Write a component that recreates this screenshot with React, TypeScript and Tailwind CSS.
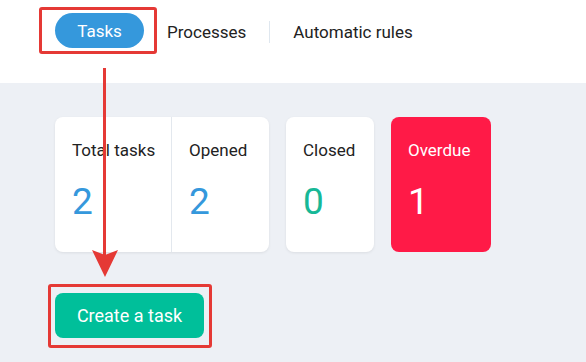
import React from "react";

function StatCell({ label, value, valueClass, className }) {
  return (
    <div className={"flex flex-col pl-[17px] pt-[21px] " + className}>
      <span className="text-[17px] leading-[24px]">{label}</span>
      <span className={"mt-[19px] text-[37px] leading-[42px] " + valueClass}>{value}</span>
    </div>
  );
}

function App() {
  return (
    <div
      className="relative w-[586px] h-[362px] bg-[#edf0f5] overflow-hidden"
      style={{ fontFamily: "Roboto, 'Liberation Sans', sans-serif" }}
    >
      <div className="h-[83px] bg-white pt-[7px] pl-[39px]">
        <div className="flex items-center h-[47px]">
          <div className="border-[3px] border-[#e53935] rounded-[3px] h-[47px] w-[118px] flex items-center pl-[13px]">
            <div className="h-[35px] w-[89px] rounded-full bg-[#3598dc] text-white text-[17px] pt-[2px] flex items-center justify-center">
              Tasks
            </div>
          </div>
          <span className="ml-[10px] pt-[4px] text-[17px] text-[#222]">Processes</span>
          <div className="ml-[23px] mt-[2px] w-px h-[22px] bg-[#dfe7ef]" />
          <span className="ml-[23px] pt-[4px] text-[17px] text-[#222]">Automatic rules</span>
        </div>
      </div>

      <div className="pt-[34px] pl-[55px]">
        <div className="flex gap-[17px] text-[#222]">
          <div className="flex h-[135px] bg-white rounded-[8px] shadow-[0_1px_3px_rgba(0,0,0,0.08)]">
            <StatCell label="Total tasks" value="2" valueClass="text-[#3598dc]" className="w-[117px] border-r border-[#e3e8ee]" />
            <StatCell label="Opened" value="2" valueClass="text-[#3598dc]" className="w-[97px]" />
          </div>
          <div className="flex h-[135px] bg-white rounded-[8px] shadow-[0_1px_3px_rgba(0,0,0,0.08)]">
            <StatCell label="Closed" value="0" valueClass="text-[#17b897]" className="w-[88px]" />
          </div>
          <div className="flex h-[135px] bg-[#ff1a47] text-white rounded-[8px]">
            <StatCell label="Overdue" value="1" valueClass="text-white" className="w-[100px]" />
          </div>
        </div>

        <div className="mt-[32px] -ml-[7px] w-[164px] h-[64px] border-[3px] border-[#e53935] rounded-[3px] pl-[4px] pt-[6px]">
          <button className="w-[149px] h-[45px] rounded-[8px] bg-[#00bf9a] text-white text-[18px]">
            Create a task
          </button>
        </div>
      </div>

      <div className="absolute left-[103px] top-[68px] w-[3px] h-[188px] bg-[#e53935]" />
      <svg className="absolute left-[91px] top-[249px]" width="30" height="29" viewBox="0 0 30 29">
        <path d="M1 1 L14 6 L27 1 L14 28 Z" fill="#e53935" />
      </svg>
    </div>
  );
}

export default App;
